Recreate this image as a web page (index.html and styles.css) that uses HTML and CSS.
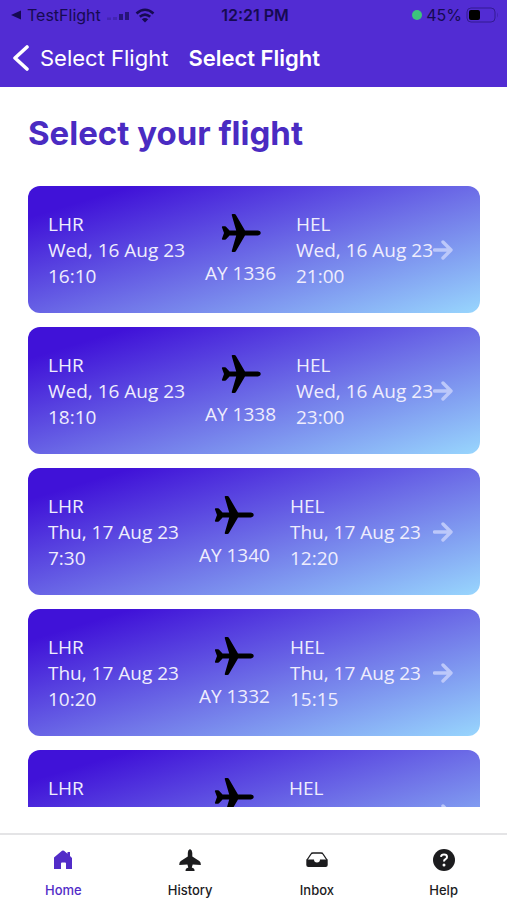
FILE: index.html
```html
<!DOCTYPE html>
<html lang="en">
<head>
  <meta charset="UTF-8" />
  <meta name="viewport" content="width=device-width, initial-scale=1" />
  <title>Select Flight</title>
  <link rel="stylesheet" href="styles.css">
</head>
<body>

  <!-- === Shared icons === -->
  <svg class="sprite" aria-hidden="true">
    <symbol id="plane" viewBox="0 0 40 38">
      <path d="M11.500 0h1.800q1.200 0 1.800 1.200L24 16.600H37q2.800.4 2.800 2.400T37 21.400H24L15.100 36.800Q14.500 38 13.300 38h-1.800q-1 0-.7-1.200L15.200 21.400H8.500l-3.200 3.700q-.5.600-1.300.6H1.700q-1.100 0-.7-1.200L3 19 1 13.500q-.4-1.200.7-1.200H4q.8 0 1.300.6l3.200 3.700h6.700L10.800 1.200Q10.500 0 11.500 0z"/>
    </symbol>
    <symbol id="arrow" viewBox="0 0 20 20">
      <path d="M1.500 10h16M10 2l8 8-8 8" fill="none" stroke="currentColor" stroke-width="3.400" stroke-linecap="round" stroke-linejoin="round"/>
    </symbol>
  </svg>

  <!-- === Header === -->
  <header class="header">
    <div class="status">
      <div class="status-left">
        <svg class="status-back" width="10" height="10" viewBox="0 0 10 10"><path d="M0 5l10-4.500v9z"/></svg>
        <span>TestFlight</span>
        <svg class="signal" width="22" height="10" viewBox="0 0 22 10">
          <path class="faint" d="M0 7.500h4V10H0zM6 7h4v3H6z"/>
          <path class="dim" d="M12 4h4v6h-4zM18 2h4v8h-4z"/>
        </svg>
        <svg width="20" height="15" viewBox="0 0 20 15">
          <path d="M1.500 5.500q8.500-7.500 17 0M4.800 8.800q5.200-4.400 10.400 0" fill="none" stroke="currentColor" stroke-width="2.600"/>
          <path d="M10 14.500L6.800 11.300q3.200-2.400 6.400 0z"/>
        </svg>
      </div>
      <div class="status-time">12:21 PM</div>
      <div class="status-right">
        <span class="dot"></span>
        <span>45%</span>
        <svg width="33" height="16" viewBox="0 0 33 16">
          <rect class="battery" x="1" y="1" width="28" height="14" rx="4"/>
          <rect class="charge" x="3" y="3" width="11" height="10" rx="2"/>
          <path class="faint" d="M31 5.500q2 2.500 0 5z"/>
        </svg>
      </div>
    </div>
    <div class="nav">
      <a class="back" href="#">
        <svg width="16" height="26" viewBox="0 0 16 26"><path d="M14 2L2 13l12 11" fill="none" stroke="currentColor" stroke-width="3.600" stroke-linecap="round" stroke-linejoin="round"/></svg>
        Select Flight
      </a>
      <div class="nav-title">Select Flight</div>
    </div>
  </header>

  <!-- === Flights === -->
  <main class="content">
    <h1>Select your flight</h1>
    <div class="flights">
      <a class="flight" href="#">
        <div>LHR<br>Wed, 16 Aug 23<br>16:10</div>
        <div class="number"><svg class="plane"><use href="#plane"/></svg>AY 1336</div>
        <div>HEL<br>Wed, 16 Aug 23<br>21:00</div>
        <svg class="arrow"><use href="#arrow"/></svg>
      </a>
      <a class="flight" href="#">
        <div>LHR<br>Wed, 16 Aug 23<br>18:10</div>
        <div class="number"><svg class="plane"><use href="#plane"/></svg>AY 1338</div>
        <div>HEL<br>Wed, 16 Aug 23<br>23:00</div>
        <svg class="arrow"><use href="#arrow"/></svg>
      </a>
      <a class="flight" href="#">
        <div>LHR<br>Thu, 17 Aug 23<br>7:30</div>
        <div class="number"><svg class="plane"><use href="#plane"/></svg>AY 1340</div>
        <div>HEL<br>Thu, 17 Aug 23<br>12:20</div>
        <svg class="arrow"><use href="#arrow"/></svg>
      </a>
      <a class="flight" href="#">
        <div>LHR<br>Thu, 17 Aug 23<br>10:20</div>
        <div class="number"><svg class="plane"><use href="#plane"/></svg>AY 1332</div>
        <div>HEL<br>Thu, 17 Aug 23<br>15:15</div>
        <svg class="arrow"><use href="#arrow"/></svg>
      </a>
      <a class="flight" href="#">
        <div>LHR<br>Thu, 17 Aug 23</div>
        <div class="number"><svg class="plane"><use href="#plane"/></svg></div>
        <div>HEL<br>Thu, 17 Aug 23</div>
        <svg class="arrow"><use href="#arrow"/></svg>
      </a>
    </div>
  </main>

  <!-- === Tab bar === -->
  <nav class="tabs">
    <a class="tab active" href="#">
      <svg width="24" height="24" viewBox="0 0 24 24"><path d="M3 9.500L11 2.800q1-.8 2 0l3.500 2.900V4H19v4l2 2v11h-6v-5.500q0-1-1-1h-3q-1 0-1 1V21H3z"/></svg>
      Home
    </a>
    <a class="tab" href="#">
      <svg width="24" height="24" viewBox="0 0 24 24"><path d="M12 1q2.300 1 2.300 4v3.500l7 4.500q1.600 1.200 1.600 4l-8.200-.6-.9 3.100 2 1q.8.500.8 2.500H7.500q0-2 .8-2.500l2-1-.9-3.100-8.200.6q0-2.800 1.600-4l7-4.500V5Q9.700 2 12 1z"/></svg>
      History
    </a>
    <a class="tab" href="#">
      <svg width="24" height="24" viewBox="0 0 24 24">
        <path d="M2 12l4-6q.5-1 2-1h8q1.500 0 2 1l4 6" fill="none" stroke="currentColor" stroke-width="1.300"/>
        <path d="M1.300 11.500H9q0 3 3 3t3-3h7.700V17q0 2-2 2H3.300q-2 0-2-2z"/>
      </svg>
      Inbox
    </a>
    <a class="tab" href="#">
      <svg width="24" height="24" viewBox="0 0 24 24">
        <circle cx="12" cy="12" r="11"/>
        <path class="question" d="M9 8.800q.3-2.300 3-2.300 3 0 3 2.400 0 1.500-1.500 2.300T12 13.600"/>
        <circle class="question-dot" cx="12" cy="17" r="1.500"/>
      </svg>
      Help
    </a>
  </nav>

</body>
</html>
```
FILE: styles.css
```css
* {
  box-sizing: border-box;
}

body {
  margin: 0;
  height: 100vh;
  display: flex;
  flex-direction: column;
  background: #fff;
  font-family: Inter, "Liberation Sans", sans-serif;
}

a {
  color: inherit;
  text-decoration: none;
}

svg {
  display: block;
  flex: none;
  fill: currentColor;
}

.sprite {
  position: absolute;
  width: 0;
  height: 0;
}

/* === Header === */
.header {
  background: #522cd3;
  color: #fff;
}

.status {
  display: grid;
  grid-template-columns: 1fr auto 1fr;
  align-items: center;
  height: 30px;
  padding: 0 8px 0 11px;
  color: #160a52;
  font-size: 16px;
}

.status-left,
.status-right {
  display: flex;
  align-items: center;
  gap: 6px;
}

.status-right {
  justify-content: flex-end;
  gap: 4px;
}

.status-time {
  font-weight: 600;
}

.faint {
  opacity: 0.25;
}

.dim {
  opacity: 0.7;
}

.dot {
  width: 10px;
  height: 10px;
  border-radius: 50%;
  background: #3cc47c;
}

.battery {
  fill: none;
  stroke: currentColor;
  opacity: 0.5;
}

.charge {
  fill: #000;
}

.nav {
  display: flex;
  align-items: center;
  gap: 20px;
  height: 57px;
  padding: 0 13px 2px;
  font-size: 22px;
}

.back {
  display: flex;
  align-items: center;
  gap: 11px;
}

.nav-title {
  font-weight: 600;
}

/* === Flights === */
.content {
  flex: 1;
  min-height: 0;
  margin-bottom: 26px;
  padding: 26px 27px 0 28px;
  overflow: hidden;
}

h1 {
  margin: 0 0 33px;
  color: #4a2bc2;
  font-size: 33px;
  line-height: 40px;
  font-weight: 700;
}

.flights {
  display: flex;
  flex-direction: column;
  gap: 14px;
}

.flight {
  display: flex;
  align-items: flex-start;
  min-height: 127px;
  padding: 25px 27px 24px 20px;
  border-radius: 12px;
  background: linear-gradient(163deg, #4012d8 12%, #7074e8 56%, #98d6fd);
  color: #efedfd;
  font-family: "Open Sans", "Noto Sans", sans-serif;
  font-size: 19px;
  line-height: 26px;
  white-space: nowrap;
}

.number {
  display: flex;
  flex-direction: column;
  align-items: center;
  gap: 8px;
  min-width: 70px;
  margin: 3px 20px 0;
}

.plane {
  width: 40px;
  height: 38px;
  color: #000;
}

.arrow {
  align-self: center;
  width: 20px;
  height: 20px;
  margin-left: auto;
  color: #bcc8fa;
}

/* === Tab bar === */
.tabs {
  display: flex;
  height: 67px;
  border-top: 2px solid #e4e4e6;
}

.tab {
  flex: 1;
  display: flex;
  flex-direction: column;
  align-items: center;
  gap: 10px;
  padding-top: 13px;
  color: #1c1c1e;
  font-size: 13px;
  line-height: 16px;
  font-weight: 500;
}

.tab.active {
  color: #522cc8;
}

.question {
  fill: none;
  stroke: #fff;
  stroke-width: 2;
}

.question-dot {
  fill: #fff;
}
```
